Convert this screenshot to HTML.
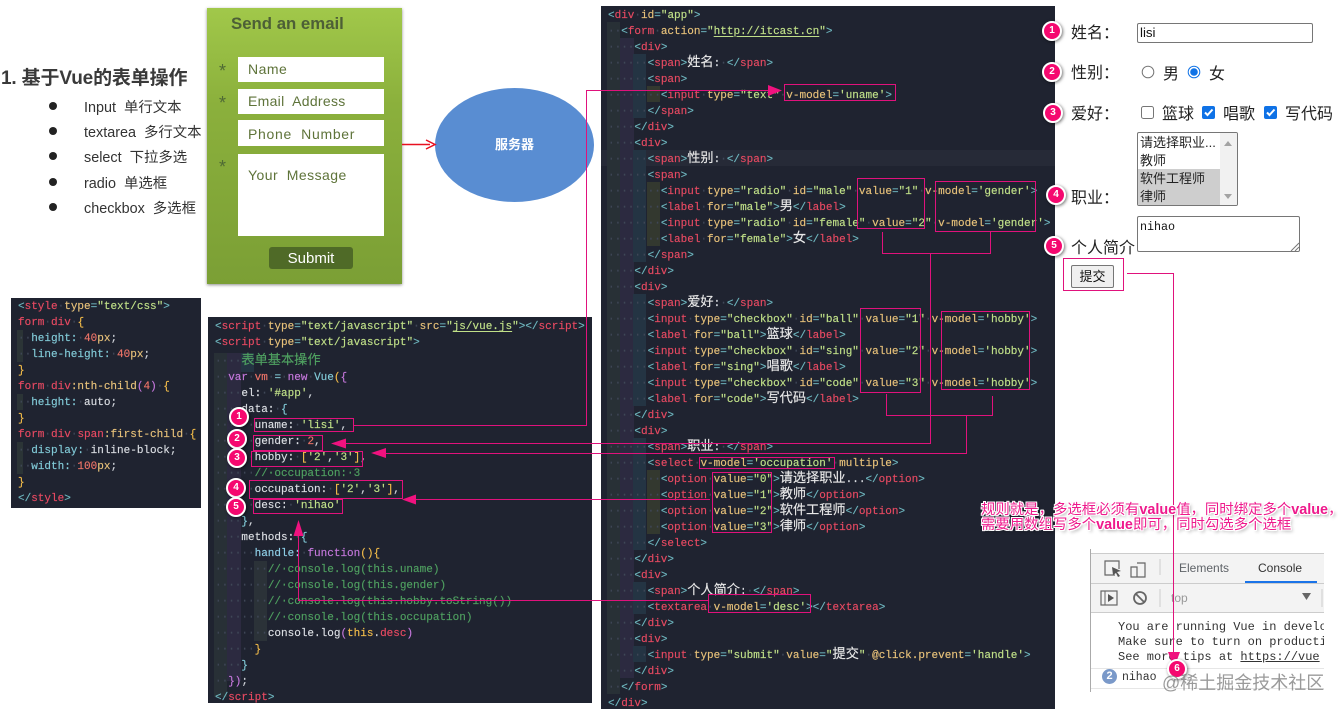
<!DOCTYPE html>
<html><head><meta charset="utf-8"><style>
html,body{margin:0;padding:0;background:#fff;width:1343px;height:714px;overflow:hidden}
body{position:relative;font-family:"Liberation Sans","Noto Sans CJK SC",sans-serif}
.abs,.panel,.g,.x{position:absolute}
.x{white-space:nowrap;color:#333}
.panel{background:#1f2330;overflow:hidden}
.code{position:absolute;font:11px/16px "Liberation Mono","Noto Sans CJK SC",monospace;color:#d0d4da;-webkit-text-stroke:.15px}
.code div{height:16px;white-space:pre}
.g{z-index:0}
.code{z-index:1}
.c{font-size:13.2px;line-height:0;color:#e8e8e8;font-family:"Noto Sans CJK SC",sans-serif}
b{font-weight:normal;color:#e84a62}
u{text-decoration:none;color:#e8c27a}
s{text-decoration:none;color:#c0e088}
i{font-style:normal;color:#3f4757}
em{font-style:normal;color:#6fb8c0}
q{quotes:none;color:#4fa060}
q::before,q::after{content:none}
q .c{color:#4fa060}
.w{color:#dcdfe4}
.k{color:#c678dd}
.y{color:#f4bd4a}
.n{color:#ee7468}
.f{color:#82cbd8}
.ul{text-decoration:underline;text-underline-offset:2px}
.fld{position:absolute;background:#fff;left:238px;width:146px;color:#5e7339;font-size:14px;padding-left:10px;box-sizing:border-box;letter-spacing:.3px}
.m{position:absolute;width:16px;height:16px;border-radius:50%;background:#f5086f;border:2px solid #fff;box-shadow:1px 1px 3px rgba(0,0,0,.55);color:#fff;font:bold 10px/16px "Liberation Sans",sans-serif;text-align:center;z-index:6;transform:translate(-10px,-10px)}
.lab{font-size:16px;color:#222}
.li{font-size:14.4px}
</style></head><body>

<!-- heading and list -->
<div class="x" style="left:1px;top:63px;font-size:19px;font-weight:bold;color:#3a3a3a;letter-spacing:-.15px">1. 基于Vue的表单操作</div>
<div class="abs" style="left:49px;top:102px;width:8px;height:8px;border-radius:50%;background:#222"></div>
<div class="abs" style="left:49px;top:127px;width:8px;height:8px;border-radius:50%;background:#222"></div>
<div class="abs" style="left:49px;top:152px;width:8px;height:8px;border-radius:50%;background:#222"></div>
<div class="abs" style="left:49px;top:178px;width:8px;height:8px;border-radius:50%;background:#222"></div>
<div class="abs" style="left:49px;top:203px;width:8px;height:8px;border-radius:50%;background:#222"></div>
<div class="x li" style="left:84px;top:96px">Input&nbsp; 单行文本</div>
<div class="x li" style="left:84px;top:121px">textarea&nbsp; 多行文本</div>
<div class="x li" style="left:84px;top:146px">select&nbsp; 下拉多选</div>
<div class="x li" style="left:84px;top:172px">radio&nbsp; 单选框</div>
<div class="x li" style="left:84px;top:197px">checkbox&nbsp; 多选框</div>

<!-- green form -->
<div class="abs" style="left:207px;top:8px;width:195px;height:276px;background:linear-gradient(#a1c84a,#8bb03c 35%,#7b9f35);box-shadow:0 1px 3px rgba(0,0,0,.45)"></div>
<div class="x" style="left:231px;top:14px;font-size:16.800px;font-weight:bold;color:#4d5f36">Send an email</div>
<div class="x" style="left:219px;top:61px;font-size:18px;color:#4f6a35">*</div>
<div class="x" style="left:219px;top:93px;font-size:18px;color:#4f6a35">*</div>
<div class="x" style="left:219px;top:157px;font-size:18px;color:#4f6a35">*</div>
<div class="fld" style="top:57px;height:25px;line-height:24px;letter-spacing:.5px">Name</div>
<div class="fld" style="top:89px;height:25px;line-height:24px">Email&nbsp; Address</div>
<div class="fld" style="top:120px;height:26px;line-height:28px;letter-spacing:.7px">Phone&nbsp; Number</div>
<div class="fld" style="top:154px;height:82px;line-height:42px;letter-spacing:.45px">Your&nbsp; Message</div>
<div class="abs" style="left:269px;top:247px;width:84px;height:22px;background:#4f6a27;border-radius:3px;color:#fff;font-size:15px;line-height:23px;text-align:center">Submit</div>

<!-- server ellipse -->
<div class="abs" style="left:435px;top:88px;width:159px;height:114px;border-radius:50%;background:#598dd2;color:#fff;font-size:13px;font-weight:bold;text-align:center;line-height:114px">服务器</div>

<!-- CSS panel -->
<div class="panel" style="left:11px;top:298px;width:190px;height:210px">
<div class="g" style="left:6px;top:32px;width:6px;height:32px;background:#2b3436"></div>
<div class="g" style="left:6px;top:96px;width:6px;height:16px;background:#2b3436"></div>
<div class="g" style="left:6px;top:144px;width:6px;height:32px;background:#2b3436"></div>
<div class="code" style="left:7px;top:1px"><div><em>&lt;</em><b>style</b><i>·</i><u>type</u><em>=</em><s>"text/css"</s><em>&gt;</em></div>
<div><b>form</b><i>·</i><b>div</b><i>·</i><span class="y">{</span></div>
<div><i>··</i><span class="f">height:</span><i>·</i><span class="n">40</span><u>px</u>;</div>
<div><i>··</i><span class="f">line-height:</span><i>·</i><span class="n">40</span><u>px</u>;</div>
<div><span class="y">}</span></div>
<div><b>form</b><i>·</i><b>div</b><u>:nth-child</u><span class="k">(</span><span class="n">4</span><span class="k">)</span><i>·</i><span class="y">{</span></div>
<div><i>··</i><span class="f">height:</span><i>·</i><span class="w">auto</span>;</div>
<div><span class="y">}</span></div>
<div><b>form</b><i>·</i><b>div</b><i>·</i><b>span</b><u>:first-child</u><i>·</i><span class="y">{</span></div>
<div><i>··</i><span class="f">display:</span><i>·</i><span class="w">inline-block</span>;</div>
<div><i>··</i><span class="f">width:</span><i>·</i><span class="n">100</span><u>px</u>;</div>
<div><span class="y">}</span></div>
<div><em>&lt;/</em><b>style</b><em>&gt;</em></div></div>
</div>

<!-- Script panel -->
<div class="panel" style="left:208px;top:317px;width:384px;height:386px">
<div class="g" style="left:6px;top:36px;width:13px;height:344px;background:#283036"></div>
<div class="g" style="left:19px;top:36px;width:14px;height:328px;background:#2c2a40"></div>
<div class="g" style="left:33px;top:36px;width:13px;height:19px;background:#243443"></div>
<div class="g" style="left:46px;top:244px;width:13px;height:80px;background:#2b3238"></div>
<div class="code" style="left:7px;top:2px"><div><em>&lt;</em><b>script</b><i>·</i><u>type</u><em>=</em><s>"text/javascript"</s><i>·</i><u>src</u><em>=</em><s>"<span class="ul">js/vue.js</span>"</s><em>&gt;&lt;/</em><b>script</b><em>&gt;</em></div>
<div><em>&lt;</em><b>script</b><i>·</i><u>type</u><em>=</em><s>"text/javascript"</s><em>&gt;</em></div>
<div style="height:19px;line-height:22px"><i>····</i><q><span class="c">表单基本操作</span></q></div>
<div><i>··</i><span class="k">var</span><i>·</i><span class="n">vm</span><i>·</i><span class="f">=</span><i>·</i><span class="k">new</span><i>·</i><span class="f">Vue</span><span class="y">(</span><span class="k">{</span></div>
<div><i>····</i><span class="w">el:</span><i>·</i><s>'#app'</s>,</div>
<div><i>····</i><span class="w">data:</span><i>·</i><span class="f">{</span></div>
<div><i>······</i><span class="w">uname:</span><i>·</i><s>'lisi'</s>,</div>
<div><i>······</i><span class="w">gender:</span><i>·</i><span class="n">2</span>,</div>
<div><i>······</i><span class="w">hobby:</span><i>·</i><span class="y">[</span><s>'2'</s>,<s>'3'</s><span class="y">]</span>,</div>
<div><i>······</i><q>//·occupation:·3</q></div>
<div><i>······</i><span class="w">occupation:</span><i>·</i><span class="y">[</span><s>'2'</s>,<s>'3'</s><span class="y">]</span>,</div>
<div><i>······</i><span class="w">desc:</span><i>·</i><s>'nihao'</s></div>
<div><i>····</i><span class="f">}</span>,</div>
<div><i>····</i><span class="w">methods:</span><i>·</i><span class="f">{</span></div>
<div><i>······</i><span style="color:#8fd0e8">handle:</span><i>·</i><span class="k">function</span><span class="y">()</span><span class="y">{</span></div>
<div><i>········</i><q>//·console.log(this.uname)</q></div>
<div><i>········</i><q>//·console.log(this.gender)</q></div>
<div><i>········</i><q>//·console.log(this.hobby.toString())</q></div>
<div><i>········</i><q>//·console.log(this.occupation)</q></div>
<div><i>········</i><span class="w">console.log</span><span class="k">(</span><span class="y">this</span>.<b>desc</b><span class="k">)</span></div>
<div><i>······</i><span class="y">}</span></div>
<div><i>····</i><span class="f">}</span></div>
<div><i>··</i><span class="k">})</span>;</div>
<div><em>&lt;/</em><b>script</b><em>&gt;</em></div></div>
</div>

<!-- Middle panel -->
<div class="panel" style="left:601px;top:6px;width:454px;height:703px">
<div class="g" style="left:0;top:144px;width:454px;height:16px;background:#262a37"></div>
<div class="g" style="left:6px;top:16px;width:13px;height:672px;background:#283036"></div>
<div class="g" style="left:19px;top:32px;width:14px;height:640px;background:#2c2a40"></div>
<div class="g" style="left:32px;top:48px;width:13px;height:64px;background:#243443"></div>
<div class="g" style="left:32px;top:144px;width:13px;height:112px;background:#243443"></div>
<div class="g" style="left:32px;top:288px;width:13px;height:112px;background:#243443"></div>
<div class="g" style="left:32px;top:432px;width:13px;height:112px;background:#243443"></div>
<div class="g" style="left:32px;top:576px;width:13px;height:32px;background:#243443"></div>
<div class="g" style="left:32px;top:640px;width:13px;height:16px;background:#243443"></div>
<div class="g" style="left:46px;top:80px;width:13px;height:16px;background:#33382f"></div>
<div class="g" style="left:46px;top:176px;width:13px;height:64px;background:#33382f"></div>
<div class="g" style="left:46px;top:464px;width:13px;height:64px;background:#33382f"></div>
<div class="code" style="left:7px;top:1.500px"><div><em>&lt;</em><b>div</b><i>·</i><u>id</u><em>=</em><s>"app"</s><em>&gt;</em></div>
<div><i>··</i><em>&lt;</em><b>form</b><i>·</i><u>action</u><em>=</em><s>"<span class="ul">http://itcast.cn</span>"</s><em>&gt;</em></div>
<div><i>····</i><em>&lt;</em><b>div</b><em>&gt;</em></div>
<div><i>······</i><em>&lt;</em><b>span</b><em>&gt;</em><span class="c">姓名</span><span class="w">:</span><i>·</i><em>&lt;/</em><b>span</b><em>&gt;</em></div>
<div><i>······</i><em>&lt;</em><b>span</b><em>&gt;</em></div>
<div><i>········</i><em>&lt;</em><b>input</b><i>·</i><u>type</u><em>=</em><s>"text"</s><i>·</i><u>v-model</u><em>=</em><s>'uname'</s><em>&gt;</em></div>
<div><i>······</i><em>&lt;/</em><b>span</b><em>&gt;</em></div>
<div><i>····</i><em>&lt;/</em><b>div</b><em>&gt;</em></div>
<div><i>····</i><em>&lt;</em><b>div</b><em>&gt;</em></div>
<div><i>······</i><em>&lt;</em><b>span</b><em>&gt;</em><span class="c">性别</span><span class="w">:</span><i>·</i><em>&lt;/</em><b>span</b><em>&gt;</em></div>
<div><i>······</i><em>&lt;</em><b>span</b><em>&gt;</em></div>
<div><i>········</i><em>&lt;</em><b>input</b><i>·</i><u>type</u><em>=</em><s>"radio"</s><i>·</i><u>id</u><em>=</em><s>"male"</s><i>·</i><u>value</u><em>=</em><s>"1"</s><i>·</i><u>v-model</u><em>=</em><s>'gender'</s><em>&gt;</em></div>
<div><i>········</i><em>&lt;</em><b>label</b><i>·</i><u>for</u><em>=</em><s>"male"</s><em>&gt;</em><span class="c">男</span><em>&lt;/</em><b>label</b><em>&gt;</em></div>
<div><i>········</i><em>&lt;</em><b>input</b><i>·</i><u>type</u><em>=</em><s>"radio"</s><i>·</i><u>id</u><em>=</em><s>"female"</s><i>·</i><u>value</u><em>=</em><s>"2"</s><i>·</i><u>v-model</u><em>=</em><s>'gender'</s><em>&gt;</em></div>
<div><i>········</i><em>&lt;</em><b>label</b><i>·</i><u>for</u><em>=</em><s>"female"</s><em>&gt;</em><span class="c">女</span><em>&lt;/</em><b>label</b><em>&gt;</em></div>
<div><i>······</i><em>&lt;/</em><b>span</b><em>&gt;</em></div>
<div><i>····</i><em>&lt;/</em><b>div</b><em>&gt;</em></div>
<div><i>····</i><em>&lt;</em><b>div</b><em>&gt;</em></div>
<div><i>······</i><em>&lt;</em><b>span</b><em>&gt;</em><span class="c">爱好</span><span class="w">:</span><i>·</i><em>&lt;/</em><b>span</b><em>&gt;</em></div>
<div><i>······</i><em>&lt;</em><b>input</b><i>·</i><u>type</u><em>=</em><s>"checkbox"</s><i>·</i><u>id</u><em>=</em><s>"ball"</s><i>·</i><u>value</u><em>=</em><s>"1"</s><i>·</i><u>v-model</u><em>=</em><s>'hobby'</s><em>&gt;</em></div>
<div><i>······</i><em>&lt;</em><b>label</b><i>·</i><u>for</u><em>=</em><s>"ball"</s><em>&gt;</em><span class="c">篮球</span><em>&lt;/</em><b>label</b><em>&gt;</em></div>
<div><i>······</i><em>&lt;</em><b>input</b><i>·</i><u>type</u><em>=</em><s>"checkbox"</s><i>·</i><u>id</u><em>=</em><s>"sing"</s><i>·</i><u>value</u><em>=</em><s>"2"</s><i>·</i><u>v-model</u><em>=</em><s>'hobby'</s><em>&gt;</em></div>
<div><i>······</i><em>&lt;</em><b>label</b><i>·</i><u>for</u><em>=</em><s>"sing"</s><em>&gt;</em><span class="c">唱歌</span><em>&lt;/</em><b>label</b><em>&gt;</em></div>
<div><i>······</i><em>&lt;</em><b>input</b><i>·</i><u>type</u><em>=</em><s>"checkbox"</s><i>·</i><u>id</u><em>=</em><s>"code"</s><i>·</i><u>value</u><em>=</em><s>"3"</s><i>·</i><u>v-model</u><em>=</em><s>'hobby'</s><em>&gt;</em></div>
<div><i>······</i><em>&lt;</em><b>label</b><i>·</i><u>for</u><em>=</em><s>"code"</s><em>&gt;</em><span class="c">写代码</span><em>&lt;/</em><b>label</b><em>&gt;</em></div>
<div><i>····</i><em>&lt;/</em><b>div</b><em>&gt;</em></div>
<div><i>····</i><em>&lt;</em><b>div</b><em>&gt;</em></div>
<div><i>······</i><em>&lt;</em><b>span</b><em>&gt;</em><span class="c">职业</span><span class="w">:</span><i>·</i><em>&lt;/</em><b>span</b><em>&gt;</em></div>
<div><i>······</i><em>&lt;</em><b>select</b><i>·</i><u>v-model</u><em>=</em><s>'occupation'</s><i>·</i><u>multiple</u><em>&gt;</em></div>
<div><i>········</i><em>&lt;</em><b>option</b><i>·</i><u>value</u><em>=</em><s>"0"</s><em>&gt;</em><span class="c">请选择职业</span><span class="w">...</span><em>&lt;/</em><b>option</b><em>&gt;</em></div>
<div><i>········</i><em>&lt;</em><b>option</b><i>·</i><u>value</u><em>=</em><s>"1"</s><em>&gt;</em><span class="c">教师</span><em>&lt;/</em><b>option</b><em>&gt;</em></div>
<div><i>········</i><em>&lt;</em><b>option</b><i>·</i><u>value</u><em>=</em><s>"2"</s><em>&gt;</em><span class="c">软件工程师</span><em>&lt;/</em><b>option</b><em>&gt;</em></div>
<div><i>········</i><em>&lt;</em><b>option</b><i>·</i><u>value</u><em>=</em><s>"3"</s><em>&gt;</em><span class="c">律师</span><em>&lt;/</em><b>option</b><em>&gt;</em></div>
<div><i>······</i><em>&lt;/</em><b>select</b><em>&gt;</em></div>
<div><i>····</i><em>&lt;/</em><b>div</b><em>&gt;</em></div>
<div><i>····</i><em>&lt;</em><b>div</b><em>&gt;</em></div>
<div><i>······</i><em>&lt;</em><b>span</b><em>&gt;</em><span class="c">个人简介</span><span class="w">:</span><i>·</i><em>&lt;/</em><b>span</b><em>&gt;</em></div>
<div><i>······</i><em>&lt;</em><b>textarea</b><i>·</i><u>v-model</u><em>=</em><s>'desc'</s><em>&gt;&lt;/</em><b>textarea</b><em>&gt;</em></div>
<div><i>····</i><em>&lt;/</em><b>div</b><em>&gt;</em></div>
<div><i>····</i><em>&lt;</em><b>div</b><em>&gt;</em></div>
<div><i>······</i><em>&lt;</em><b>input</b><i>·</i><u>type</u><em>=</em><s>"submit"</s><i>·</i><u>value</u><em>=</em><s>"<span class="c">提交</span>"</s><i>·</i><u>@click.prevent</u><em>=</em><s>'handle'</s><em>&gt;</em></div>
<div><i>····</i><em>&lt;/</em><b>div</b><em>&gt;</em></div>
<div><i>··</i><em>&lt;/</em><b>form</b><em>&gt;</em></div>
<div><em>&lt;/</em><b>div</b><em>&gt;</em></div></div>
</div>

<!-- Right form -->
<div class="x lab" style="left:1071px;top:19px">姓名：</div>
<div class="x lab" style="left:1071px;top:59px">性别：</div>
<div class="x lab" style="left:1071px;top:100px">爱好：</div>
<div class="x lab" style="left:1071px;top:184px">职业：</div>
<div class="x lab" style="left:1071px;top:234px">个人简介</div>
<div class="abs" style="left:1137px;top:23px;width:174px;height:18px;border:1px solid #767676;border-radius:2px;font-size:13.3px;line-height:18px;color:#111;text-indent:2px">lisi</div>
<svg class="abs" style="left:1135px;top:60px" width="208" height="66" viewBox="0 0 208 66">
<circle cx="13" cy="12" r="5.8" fill="#fff" stroke="#767676"/>
<circle cx="59" cy="12" r="5.8" fill="#fff" stroke="#0f72e6"/><circle cx="59" cy="12" r="3.8" fill="#0f72e6"/>
<rect x="6.5" y="46.5" width="12" height="12" rx="2" fill="#fff" stroke="#767676"/>
<rect x="67" y="46" width="13" height="13" rx="2" fill="#0f72e6"/><path d="M70 52.5l2.5 2.5 5-5.5" stroke="#fff" stroke-width="2" fill="none"/>
<rect x="129" y="46" width="13" height="13" rx="2" fill="#0f72e6"/><path d="M132 52.5l2.5 2.5 5-5.5" stroke="#fff" stroke-width="2" fill="none"/>
</svg>
<div class="x lab" style="left:1163px;top:60px">男</div>
<div class="x lab" style="left:1209px;top:60px">女</div>
<div class="x lab" style="left:1162px;top:100px">篮球</div>
<div class="x lab" style="left:1223px;top:100px">唱歌</div>
<div class="x lab" style="left:1285px;top:100px">写代码</div>
<div class="abs" style="left:1137px;top:132px;width:99px;height:72px;border:1px solid #767676;border-radius:2px;overflow:hidden;font-size:13px;line-height:18px;color:#222;background:#fff">
<div style="position:absolute;left:0;top:36px;width:82px;height:36px;background:#cecece"></div>
<div style="position:absolute;left:82px;top:0;width:17px;height:72px;background:#f1f1f1"></div>
<div style="position:absolute;left:2px;top:1px;width:80px;white-space:nowrap;overflow:hidden">请选择职业...<br>教师<br>软件工程师<br>律师</div>
<div style="position:absolute;left:86px;top:8px;border:4px solid transparent;border-bottom:5px solid #a3a3a3;border-top:0"></div>
<div style="position:absolute;left:86px;top:61px;border:4px solid transparent;border-top:5px solid #a3a3a3;border-bottom:0"></div>
</div>
<div class="abs" style="left:1137px;top:216px;width:161px;height:34px;border:1px solid #767676;border-radius:2px;font:11.7px/20px 'Liberation Mono',monospace;color:#111;text-indent:2px">nihao
<svg style="position:absolute;right:0;bottom:0" width="10" height="10"><path d="M2 10L10 2M6 10L10 6" stroke="#777" fill="none"/></svg></div>
<div class="abs" style="left:1071px;top:265px;width:41px;height:21px;border:1px solid #767676;border-radius:2px;background:#efefef;font-size:13px;line-height:22px;text-align:center;color:#111">提交</div>

<!-- DevTools -->
<div class="abs" style="left:1090px;top:549px;width:233px;height:143px;border-left:1px solid #aaa;overflow:hidden;background:#fff">
<div class="abs" style="left:0;top:4px;width:233px;height:29px;background:#f3f3f3;border-top:1px solid #ccc;border-bottom:1px solid #ccc"></div>
<div class="abs" style="left:0;top:35px;width:233px;height:28px;background:#f3f3f3;border-bottom:1px solid #ccc"></div>
<div class="abs" style="left:154px;top:32px;width:72px;height:2px;background:#1a73e8"></div>
<div class="x" style="left:88px;top:12px;font-size:12px;color:#5f6368">Elements</div>
<div class="x" style="left:167px;top:12px;font-size:12px;color:#333">Console</div>
<div class="x" style="left:80px;top:42px;font-size:12px;color:#999">top</div>
<svg class="abs" style="left:0;top:0" width="233" height="70">
<path d="M24 26h-10v-14h14v8" fill="none" stroke="#666" stroke-width="1.2"/><path d="M21 18l9 4-4 1 3 4-2 1-2-4-3 2z" fill="#555"/>
<path d="M40 28v-10h6v10zM46 14h8v14h-8" fill="none" stroke="#666" stroke-width="1.2"/>
<line x1="69" y1="10" x2="69" y2="26" stroke="#ccc"/>
<rect x="10" y="42" width="16" height="14" fill="none" stroke="#666" stroke-width="1.2"/><path d="M14 42v14" stroke="#666"/><path d="M17 45v8l6-4z" fill="#555"/>
<circle cx="49" cy="49" r="6" fill="none" stroke="#666" stroke-width="1.8"/><path d="M45 45l8 8" stroke="#666" stroke-width="1.8"/>
<line x1="69" y1="40" x2="69" y2="58" stroke="#ccc"/><line x1="231" y1="40" x2="231" y2="58" stroke="#ccc"/>
<path d="M211 44h9l-4.500 7z" fill="#666"/>
</svg>
<div class="x" style="left:27px;top:71px;font:12px/15px 'Liberation Mono',monospace;color:#333">You are running Vue in develo<br>Make sure to turn on producti<br>See more tips at <span style="text-decoration:underline">https://vue</span></div>
<div class="abs" style="left:0;top:119px;width:233px;height:1px;background:#e6e6e6"></div>
<div class="abs" style="left:0;top:139px;width:233px;height:1px;background:#e6e6e6"></div>
<div class="abs" style="left:11px;top:120px;width:15px;height:15px;border-radius:50%;background:#7a99c9;color:#fff;font:bold 11px/15px 'Liberation Sans',sans-serif;text-align:center">2</div>
<div class="x" style="left:31px;top:122px;font:11.5px/14px 'Liberation Mono',monospace;color:#333">nihao</div>
</div>
<div class="x" style="left:1162px;top:669px;font-size:18px;color:rgba(120,120,120,.75);z-index:7">@稀土掘金技术社区</div>

<!-- annotation lines -->
<svg class="abs" style="left:0;top:0;z-index:4" width="1343" height="714" viewBox="0 0 1343 714" fill="none">
<g stroke="#e0127c" stroke-width="1">
<rect x="254.500" y="418.500" width="99" height="13"/>
<rect x="253.500" y="435.500" width="69" height="15"/>
<rect x="251.500" y="451.500" width="111" height="15"/>
<rect x="249.500" y="480.500" width="153" height="18"/>
<rect x="253.500" y="499.500" width="89" height="14"/>
<path d="M354 425.500H586.500V90.500H772"/>
<rect x="784.500" y="84.500" width="111" height="16"/>
<rect x="857.500" y="178.500" width="67" height="50"/>
<rect x="935.500" y="181.500" width="100" height="50"/>
<path d="M882.500 232V253.500H990.500V232M930.500 253V443.500H345"/>
<rect x="860.500" y="308.500" width="60" height="84"/>
<rect x="941.500" y="311.500" width="88" height="78"/>
<path d="M886.500 394V415.500H992.500V396M966.500 415V453.500H385"/>
<rect x="699.500" y="457.500" width="135" height="11"/>
<rect x="712.500" y="472.500" width="59" height="60"/>
<path d="M415 499.500H710"/>
<rect x="708.500" y="594.500" width="102" height="18"/>
<path d="M298.500 535V600.500H708"/>
<rect x="1063.500" y="258.500" width="60" height="32"/>
<path d="M1127 273.500H1173.500V655"/>
</g>
<path d="M402 144.500H430" stroke="#e81020" stroke-width="1.500"/><path d="M426 140l9 4.500-9 4.500" stroke="#e81020" stroke-width="1.500"/>
<g fill="#f0127f">
<path d="M768 85L782 90.500 768 96z"/>
<path d="M331 443.500L346 438.500V448.500z"/>
<path d="M371 453L386 448V458z"/>
<path d="M402 499.500L416 494.500V504.500z"/>
<path d="M298.500 520L293.500 536H303.500z"/>
<path d="M1168 652H1180L1174 668z"/>
</g></svg>
<div class="m" style="left:239px;top:417px">1</div>
<div class="m" style="left:237px;top:439px">2</div>
<div class="m" style="left:237px;top:458px">3</div>
<div class="m" style="left:236px;top:488px">4</div>
<div class="m" style="left:236px;top:507px">5</div>
<div class="m" style="left:1052px;top:31px">1</div>
<div class="m" style="left:1052px;top:72px">2</div>
<div class="m" style="left:1053px;top:113px">3</div>
<div class="m" style="left:1056px;top:195px">4</div>
<div class="m" style="left:1054px;top:246px">5</div>
<div class="m" style="left:1177px;top:669px">6</div>

<!-- note -->
<div class="x" style="left:981px;top:503px;z-index:8;font-size:14.400px;line-height:15px;color:#ee1a8c;text-shadow:1px 0 0 #fff,-1px 0 0 #fff,0 1px 0 #fff,0 -1px 0 #fff,1px 1px 0 #fff,-1px -1px 0 #fff,1px -1px 0 #fff,-1px 1px 0 #fff,2px 2px 3px rgba(0,0,0,.45)">规则就是，多选框必须有<strong>value</strong>值，同时绑定多个<strong>value</strong>，<br>需要用数组写多个<strong>value</strong>即可，同时勾选多个选框</div>
</body></html>
